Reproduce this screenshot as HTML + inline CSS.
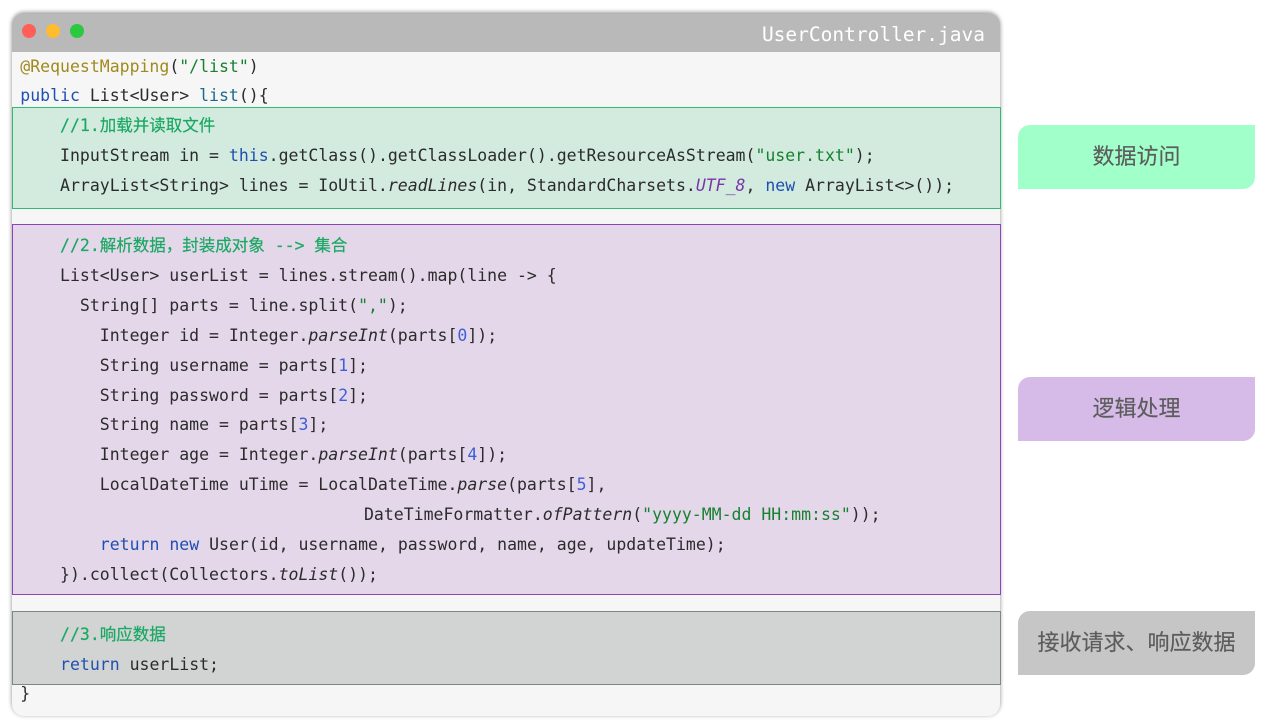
<!DOCTYPE html>
<html>
<head>
<meta charset="utf-8">
<style>
html,body{margin:0;padding:0;width:1280px;height:728px;background:#fff;overflow:hidden}
.win{position:absolute;left:12px;top:14px;width:988px;height:702px;background:#f6f6f6;border-radius:12px;box-shadow:0 0 5px rgba(0,0,0,.16),0 -2px 4px rgba(0,0,0,.32)}
.bar{position:absolute;left:12px;top:14px;width:988px;height:38px;background:#b9b9b9;border-radius:11px 11px 0 0}
.dot{position:absolute;top:24px;width:14px;height:14px;border-radius:50%}
.title{position:absolute;right:295px;top:22.5px;color:#fff;font:19.5px/24px "DejaVu Sans Mono",monospace;white-space:pre}
.box{position:absolute;left:12px;width:987px;box-sizing:content-box;border:1px solid}
.l{position:absolute;left:20.3px;margin:0;height:24px;font:16.5px/24px "DejaVu Sans Mono","Noto Sans CJK SC",monospace;color:#2b2b2b;white-space:pre}
.k{color:#1f4fb0}.s{color:#16812f}.c{color:#1aa863;-webkit-text-stroke:.2px #1aa863}.a{color:#a08a1e}.f{color:#1d6b8a}.n{color:#3f5fd8}.i{font-style:italic}.u{font-style:italic;color:#7a35a8}
.tag{position:absolute;left:1018px;width:237px;height:64px;border-radius:12px 0 12px 0;color:#5c5c5c;font:22px/61px "Noto Sans CJK SC","Liberation Sans",sans-serif;text-align:center;-webkit-text-stroke:.15px #5c5c5c}
</style>
</head>
<body>
<div class="win"></div>
<div class="bar"></div>
<div class="dot" style="left:22px;background:#ff5f57"></div>
<div class="dot" style="left:46px;background:#febc2e"></div>
<div class="dot" style="left:70px;background:#2cc840"></div>
<div class="title">UserController.java</div>

<div class="box" style="top:107px;height:100px;background:#d2ebde;border-color:#2fbb73"></div>
<div class="box" style="top:224px;height:369px;background:#e4d7ea;border-color:#8b45b8"></div>
<div class="box" style="top:611px;height:72px;background:#d2d4d3;border-color:#7f8783"></div>

<pre class="l" style="top:55px"><span class="a">@RequestMapping</span>(<span class="s">"/list"</span>)</pre>
<pre class="l" style="top:84px"><span class="k">public</span> List&lt;User&gt; <span class="f">list</span>(){</pre>
<pre class="l" style="top:114px"><span class="c">    //1.加载并读取文件</span></pre>
<pre class="l" style="top:144px">    InputStream in = <span class="k">this</span>.getClass().getClassLoader().getResourceAsStream(<span class="s">"user.txt"</span>);</pre>
<pre class="l" style="top:174px">    ArrayList&lt;String&gt; lines = IoUtil.<span class="i">readLines</span>(in, StandardCharsets.<span class="u">UTF_8</span>, <span class="k">new</span> ArrayList&lt;&gt;());</pre>
<pre class="l" style="top:234px"><span class="c">    //2.解析数据，封装成对象 --&gt; 集合</span></pre>
<pre class="l" style="top:264px">    List&lt;User&gt; userList = lines.stream().map(line -&gt; {</pre>
<pre class="l" style="top:294px">      String[] parts = line.split(<span class="s">","</span>);</pre>
<pre class="l" style="top:324px">        Integer id = Integer.<span class="i">parseInt</span>(parts[<span class="n">0</span>]);</pre>
<pre class="l" style="top:354px">        String username = parts[<span class="n">1</span>];</pre>
<pre class="l" style="top:384px">        String password = parts[<span class="n">2</span>];</pre>
<pre class="l" style="top:413px">        String name = parts[<span class="n">3</span>];</pre>
<pre class="l" style="top:443px">        Integer age = Integer.<span class="i">parseInt</span>(parts[<span class="n">4</span>]);</pre>
<pre class="l" style="top:473px">        LocalDateTime uTime = LocalDateTime.<span class="i">parse</span>(parts[<span class="n">5</span>],</pre>
<pre class="l" style="top:503px;left:16.3px">                                   DateTimeFormatter.<span class="i">ofPattern</span>(<span class="s">"yyyy-MM-dd HH:mm:ss"</span>));</pre>
<pre class="l" style="top:533px">        <span class="k">return</span> <span class="k">new</span> User(id, username, password, name, age, updateTime);</pre>
<pre class="l" style="top:563px">    }).collect(Collectors.<span class="i">toList</span>());</pre>
<pre class="l" style="top:623px"><span class="c">    //3.响应数据</span></pre>
<pre class="l" style="top:653px">    <span class="k">return</span> userList;</pre>
<pre class="l" style="top:682px">}</pre>

<div class="tag" style="top:125px;background:#a1ffca">数据访问</div>
<div class="tag" style="top:377px;background:#d6bbe9">逻辑处理</div>
<div class="tag" style="top:611px;background:#c6c6c6">接收请求、响应数据</div>
</body>
</html>
